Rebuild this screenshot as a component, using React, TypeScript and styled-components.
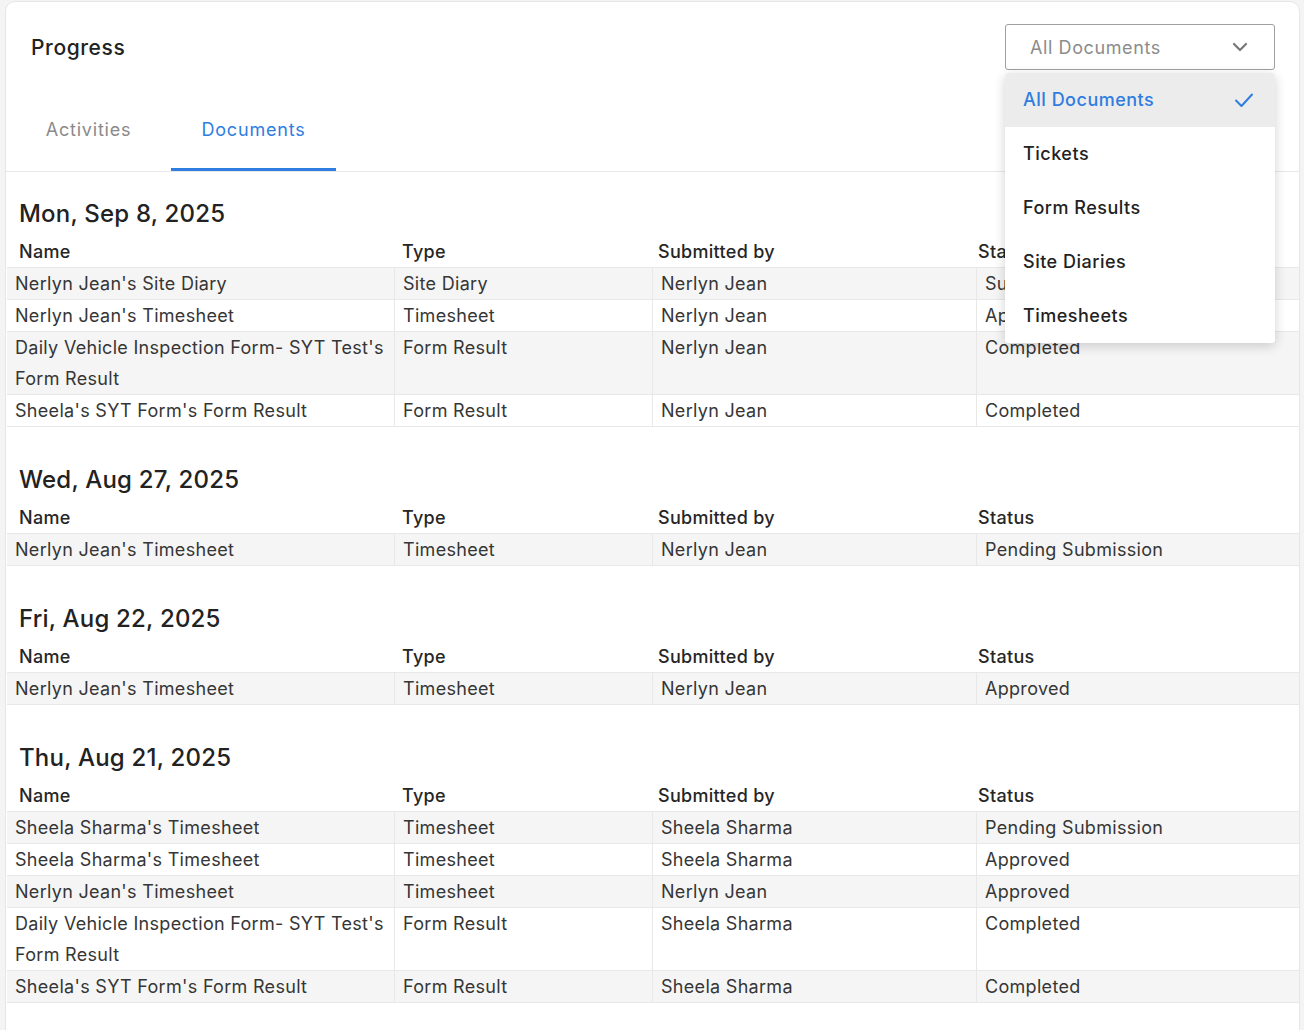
import React from 'react';
import styled, { createGlobalStyle } from 'styled-components';

const GlobalStyle = createGlobalStyle`
  html, body {
    margin: 0;
    padding: 0;
    background: #f4f4f4;
  }
  body {
    font-family: Inter, "Open Sans", sans-serif;
    color: #2b2b2b;
    letter-spacing: 0.3px;
  }
`;

type Row = { name: string; type: string; by: string; status: string };
type Day = { date: string; rows: Row[] };

const days: Day[] = [
  {
    date: 'Mon, Sep 8, 2025',
    rows: [
      { name: "Nerlyn Jean's Site Diary", type: 'Site Diary', by: 'Nerlyn Jean', status: 'Submitted' },
      { name: "Nerlyn Jean's Timesheet", type: 'Timesheet', by: 'Nerlyn Jean', status: 'Approved' },
      { name: "Daily Vehicle Inspection Form- SYT Test's Form Result", type: 'Form Result', by: 'Nerlyn Jean', status: 'Completed' },
      { name: "Sheela's SYT Form's Form Result", type: 'Form Result', by: 'Nerlyn Jean', status: 'Completed' },
    ],
  },
  {
    date: 'Wed, Aug 27, 2025',
    rows: [{ name: "Nerlyn Jean's Timesheet", type: 'Timesheet', by: 'Nerlyn Jean', status: 'Pending Submission' }],
  },
  {
    date: 'Fri, Aug 22, 2025',
    rows: [{ name: "Nerlyn Jean's Timesheet", type: 'Timesheet', by: 'Nerlyn Jean', status: 'Approved' }],
  },
  {
    date: 'Thu, Aug 21, 2025',
    rows: [
      { name: "Sheela Sharma's Timesheet", type: 'Timesheet', by: 'Sheela Sharma', status: 'Pending Submission' },
      { name: "Sheela Sharma's Timesheet", type: 'Timesheet', by: 'Sheela Sharma', status: 'Approved' },
      { name: "Nerlyn Jean's Timesheet", type: 'Timesheet', by: 'Nerlyn Jean', status: 'Approved' },
      { name: "Daily Vehicle Inspection Form- SYT Test's Form Result", type: 'Form Result', by: 'Sheela Sharma', status: 'Completed' },
      { name: "Sheela's SYT Form's Form Result", type: 'Form Result', by: 'Sheela Sharma', status: 'Completed' },
    ],
  },
];

const filters = ['All Documents', 'Tickets', 'Form Results', 'Site Diaries', 'Timesheets'];

const Card = styled.div`
  margin: 1px 0 0 5px;
  width: 1295px;
  min-height: 1040px;
  box-sizing: border-box;
  background: #fff;
  border: 1px solid #e6e6e6;
  border-radius: 10px 10px 0 0;
`;

const Header = styled.div`
  display: flex;
  align-items: center;
  justify-content: space-between;
  padding: 22px 24px 0 25px;
`;

const Title = styled.h2`
  margin: 0;
  font-size: 21px;
  font-weight: 500;
  letter-spacing: 0.6px;
  color: #222;
`;

const SelectWrap = styled.div`
  position: relative;
  width: 270px;
`;

const SelectBox = styled.div`
  height: 46px;
  box-sizing: border-box;
  border: 1px solid #a0a0a0;
  border-radius: 3px;
  display: flex;
  align-items: center;
  justify-content: space-between;
  padding: 0 26px 0 24px;
  font-size: 18px;
  letter-spacing: 0.6px;
  color: #8c8c8c;
`;

const Menu = styled.ul`
  position: absolute;
  top: 49px;
  left: 0;
  right: 0;
  margin: 0;
  padding: 0;
  list-style: none;
  background: #fff;
  border-radius: 4px;
  box-shadow: 0 3px 12px rgba(0, 0, 0, 0.18);
  overflow: hidden;
  z-index: 10;
`;

const MenuItem = styled.li<{ $active?: boolean }>`
  height: 54px;
  display: flex;
  align-items: center;
  justify-content: space-between;
  padding: 0 21px 1px 18px;
  box-sizing: border-box;
  font-size: 18px;
  font-weight: 500;
  letter-spacing: 0.5px;
  color: ${(p) => (p.$active ? '#2f7de1' : '#222')};
  background: ${(p) => (p.$active ? '#ececec' : '#fff')};
`;

const TabBar = styled.div`
  display: flex;
  margin-top: 37px;
  border-bottom: 1px solid #e8e8e8;
`;

const Tab = styled.div<{ $active?: boolean }>`
  width: 165px;
  height: 64px;
  box-sizing: border-box;
  padding-top: 12px;
  text-align: center;
  font-size: 18px;
  line-height: 22px;
  letter-spacing: 0.8px;
  color: ${(p) => (p.$active ? '#2f7de1' : '#8a8a8a')};
  border-bottom: 3px solid ${(p) => (p.$active ? '#2f7de1' : 'transparent')};
`;

const Content = styled.div`
  padding: 27px 0 0 1px;
`;

const Section = styled.section`
  margin-bottom: 38px;
`;

const DateHeading = styled.h3`
  margin: 0 0 8px;
  padding-left: 12px;
  font-size: 24px;
  line-height: 30px;
  font-weight: 500;
  letter-spacing: 0.2px;
  color: #222;
`;

const HeadRow = styled.div`
  display: grid;
  grid-template-columns: 383px 256px 320px 1fr;
  padding-left: 12px;
  font-size: 18px;
  line-height: 30px;
  font-weight: 500;
  color: #262626;
  border-bottom: 1px solid #e8e8e8;
`;

const BodyRow = styled.div<{ $striped?: boolean }>`
  display: grid;
  grid-template-columns: 388px 258px 324px 1fr;
  background: ${(p) => (p.$striped ? '#f5f5f5' : '#fff')};
  border-bottom: 1px solid #e8e8e8;
`;

const Cell = styled.div`
  padding: 0 8px;
  font-size: 18px;
  line-height: 31px;
  color: #363636;
  border-right: 1px solid #e8e8e8;
  &:last-child {
    border-right: none;
  }
`;

const Chevron = () => (
  <svg width="16" height="10" viewBox="0 0 16 10" fill="none">
    <path d="M2 2l6 6 6-6" stroke="#777" strokeWidth="2.2" strokeLinecap="round" strokeLinejoin="round" />
  </svg>
);

const Check = () => (
  <svg width="20" height="16" viewBox="0 0 20 16" fill="none">
    <path d="M2 8.5l5.5 5.5L18 2.5" stroke="#2f7de1" strokeWidth="2" strokeLinecap="round" strokeLinejoin="round" />
  </svg>
);

const App = () => (
  <>
    <GlobalStyle />
    <Card>
      <Header>
        <Title>Progress</Title>
        <SelectWrap>
          <SelectBox>
            All Documents
            <Chevron />
          </SelectBox>
          <Menu>
            {filters.map((f, i) => (
              <MenuItem key={f} $active={i === 0}>
                {f}
                {i === 0 && <Check />}
              </MenuItem>
            ))}
          </Menu>
        </SelectWrap>
      </Header>
      <TabBar>
        <Tab>Activities</Tab>
        <Tab $active>Documents</Tab>
      </TabBar>
      <Content>
        {days.map((d) => (
          <Section key={d.date}>
            <DateHeading>{d.date}</DateHeading>
            <HeadRow>
              <div>Name</div>
              <div>Type</div>
              <div>Submitted by</div>
              <div>Status</div>
            </HeadRow>
            {d.rows.map((r, i) => (
              <BodyRow key={i} $striped={i % 2 === 0}>
                <Cell>{r.name}</Cell>
                <Cell>{r.type}</Cell>
                <Cell>{r.by}</Cell>
                <Cell>{r.status}</Cell>
              </BodyRow>
            ))}
          </Section>
        ))}
      </Content>
    </Card>
  </>
);

export default App;
